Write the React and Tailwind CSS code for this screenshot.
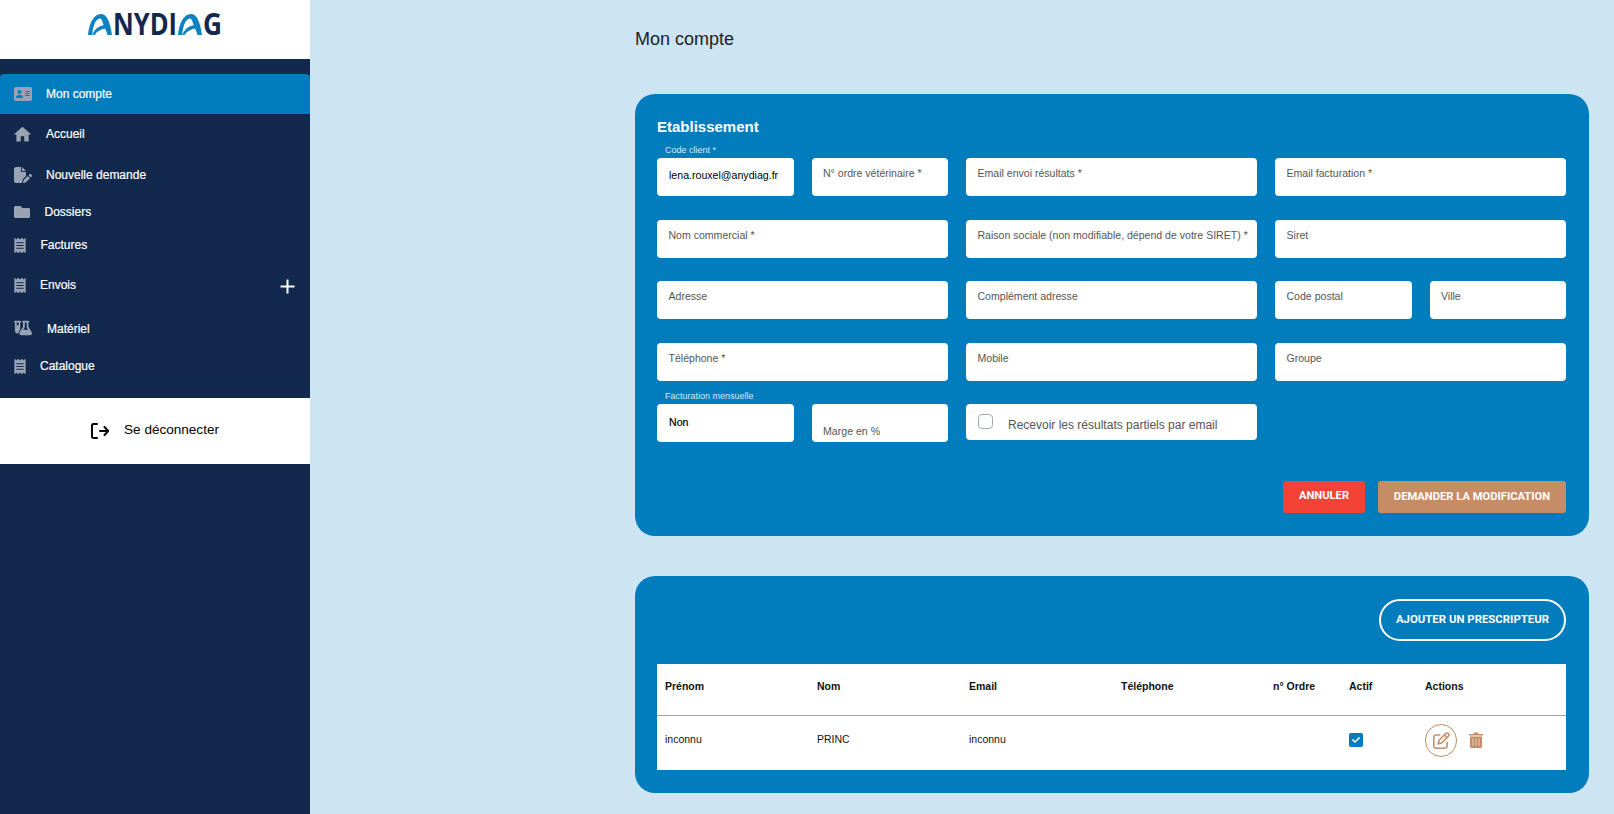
import React from "react";
import { FaFolder, FaReceipt, FaCheck } from "react-icons/fa";
import { FaFlaskVial, FaAddressCard, FaFilePen, FaRegPenToSquare } from "react-icons/fa6";
import { MdHome } from "react-icons/md";

const SANS = "font-['Liberation_Sans',Arial,sans-serif]";

function Logo() {
  const A = "M0 21 C1 9 6 0 13 0 C18.5 0 22 7 24 21 L19.5 21 C18.8 18 18 16 16.8 14.5 C12 15.5 8.5 17.8 6.5 21 L4.5 21 C6 15.5 10 12.5 15.6 11.2 C14.6 7 13.5 4.5 11.500 4.5 C7.5 5.5 5 12 4.2 21 Z";
  return (
    <svg width="136" height="48" viewBox="0 0 136 48" className="block" role="img" aria-label="ANYDIAG">
      <path d={A} fill="#0b83c2" transform="translate(0 13)" />
      <text x="25" y="34" fontFamily="'Open Sans',sans-serif" fontSize="29.5" fontWeight="700" fill="#12284c" textLength="64" lengthAdjust="spacingAndGlyphs">NYDI</text>
      <path d={A} fill="#0b83c2" transform="translate(90 13)" />
      <text x="115" y="34" fontFamily="'Open Sans',sans-serif" fontSize="29.5" fontWeight="700" fill="#12284c" textLength="19" lengthAdjust="spacingAndGlyphs">G</text>
    </svg>
  );
}

function NavItem({ icon, label, h, textClass, active, extra }) {
  return (
    <div className={`flex items-center pl-[14px] pr-[15px] ${h} ${active ? "bg-[#017cbc] rounded-t-[4px]" : ""}`}>
      <span className="text-[#9aa3b3] flex items-center">{icon}</span>
      <span className={`text-white text-[12px] font-medium [-webkit-text-stroke:0.2px_white] ${textClass}`}>{label}</span>
      {extra}
    </div>
  );
}

function Field({ label, className = "" }) {
  return (
    <div className={`bg-white rounded-[4px] px-[11.5px] pt-[8px] text-[10.55px] leading-[14px] whitespace-nowrap text-[#555] ${className}`}>
      {label}
    </div>
  );
}

function Floating({ label, value, className = "" }) {
  return (
    <div className={`relative bg-white rounded-[4px] pl-[12px] flex items-center text-[10.6px] text-black ${className}`}>
      <span className="absolute left-[8px] top-[-14px] text-[9px] leading-[12px] text-[#d5ecf8]">{label}</span>
      {value}
    </div>
  );
}

const cols = "grid grid-cols-[152px_152px_152px_152px_76px_76px_1fr]";

export default function App() {
  return (
    <div className={`flex h-[814px] w-full overflow-hidden bg-[#cde4f3] ${SANS}`}>
      <aside className="w-[310px] shrink-0 bg-[#12284c] flex flex-col">
        <div className="h-[59px] bg-white flex justify-center pt-[1px] pl-[1px]">
          <Logo />
        </div>
        <nav className="pt-[15px] pb-[14px]">
          <NavItem active h="h-[40px]" icon={<FaAddressCard size={18} />} label="Mon compte" textClass="ml-[14px]" />
          <NavItem h="h-[40px]" icon={<MdHome size={21} className="-ml-[2px]" />} label="Accueil" textClass="ml-[13px]" />
          <NavItem h="h-[42px]" icon={<FaFilePen size={16} className="w-[18px]" />} label="Nouvelle demande" textClass="ml-[14px]" />
          <NavItem h="h-[32px]" icon={<FaFolder size={16} />} label="Dossiers" textClass="ml-[14.5px]" />
          <NavItem h="h-[34px]" icon={<FaReceipt size={15} className="w-[12px]" />} label="Factures" textClass="ml-[14.5px]" />
          <NavItem
            h="h-[46px]"
            icon={<FaReceipt size={15} className="w-[12px]" />}
            label="Envois"
            textClass="ml-[14px]"
            extra={
              <span className="ml-auto relative top-[1px] w-[15px] h-[15px] flex items-center justify-center">
                <svg width="15" height="15" viewBox="0 0 15 15"><path d="M7.5 0.5v14M0.5 7.5h14" stroke="#fff" strokeWidth="2" /></svg>
              </span>
            }
          />
          <NavItem h="h-[40px]" icon={<FaFlaskVial size={18} />} label={<span className="relative top-[1px]">Matériel</span>} textClass="ml-[15px]" />
          <NavItem h="h-[36px]" icon={<FaReceipt size={15} className="w-[12px]" />} label="Catalogue" textClass="ml-[14px]" />
        </nav>
        <div className="h-[66px] bg-white flex items-center justify-center gap-[15px] pb-[1px]">
          <svg width="18" height="16" viewBox="0 0 18 16" fill="none" stroke="#000" strokeWidth="2" strokeLinecap="round" strokeLinejoin="round">
            <path d="M6 1H2.5C1.7 1 1 1.7 1 2.5v11c0 .8.7 1.5 1.5 1.5H6" />
            <path d="M9 8h8M13.5 4l3.7 4-3.7 4" />
          </svg>
          <span className="text-[13.55px] text-black">Se déconnecter</span>
        </div>
      </aside>

      <main className="flex-1 pl-[325px] pr-[25px] min-w-0">
        <h1 className="h-[94px] pt-[26px] text-[18px] leading-[26px] text-[#222] font-normal">Mon compte</h1>

        <section className="h-[442px] bg-[#017cbc] rounded-[20px] pl-[22px] pr-[23px] pt-[24px] flex flex-col">
          <h2 className="text-[15px] leading-[18px] font-bold text-white">Etablissement</h2>
          <div className="grid grid-cols-6 gap-x-[18px] gap-y-[23.5px] auto-rows-[38px] mt-[22px]">
            <Floating label="Code client *" value={<span className="relative top-[-1px]">lena.rouxel@anydiag.fr</span>} />
            <Field label="N° ordre vétérinaire *" />
            <Field label="Email envoi résultats *" className="col-span-2" />
            <Field label="Email facturation *" className="col-span-2" />

            <Field label="Nom commercial *" className="col-span-2" />
            <Field label="Raison sociale (non modifiable, dépend de votre SIRET) *" className="col-span-2" />
            <Field label="Siret" className="col-span-2" />

            <Field label="Adresse" className="col-span-2" />
            <Field label="Complément adresse" className="col-span-2" />
            <Field label="Code postal" />
            <Field label="Ville" />

            <Field label="Téléphone *" className="col-span-2" />
            <Field label="Mobile" className="col-span-2" />
            <Field label="Groupe" className="col-span-2" />

            <Floating label="Facturation mensuelle" value={<span className="font-medium [-webkit-text-stroke:0.2px_black]">Non</span>} />
            <div className="bg-white rounded-[4px] pl-[11.5px] flex items-end pb-[2px] text-[10.6px] text-[#555]">Marge en %</div>
            <label className="col-span-2 h-[36px] bg-white rounded-[4px] pl-[12px] flex items-center text-[12px] text-[#555]">
              <span className="w-[15px] h-[15px] rounded-[4px] border border-[#a3a8b8] relative top-[-1px]" />
              <span className="ml-[15px] relative top-[3px]">Recevoir les résultats partiels par email</span>
            </label>
          </div>
          <div className="flex justify-end gap-[13px] mt-[39px]">
            <button className="w-[82px] h-[32px] rounded-[3px] bg-[#f44336] text-white text-[11.2px] font-bold font-['Roboto',sans-serif] pb-[2px]">ANNULER</button>
            <button className="w-[188px] h-[32px] rounded-[3px] bg-[#c68c66] text-white text-[11.2px] font-bold font-['Roboto',sans-serif]">DEMANDER LA MODIFICATION</button>
          </div>
        </section>

        <section className="mt-[40px] h-[217px] bg-[#017cbc] rounded-[20px] pl-[22px] pr-[23px] pt-[23px]">
          <div className="flex justify-end">
            <button className="w-[187px] h-[42px] rounded-full border-2 border-white text-white text-[11.4px] font-bold font-['Roboto',sans-serif]">AJOUTER UN PRESCRIPTEUR</button>
          </div>
          <div className="mt-[23px] bg-white text-[10.5px] text-[#111]">
            <div className={`${cols} h-[52px] items-center border-b border-[#a5a5a5] font-bold pb-[6px]`}>
              {["Prénom", "Nom", "Email", "Téléphone", "n° Ordre", "Actif", "Actions"].map((h) => (
                <div key={h} className="pl-[8px]">{h}</div>
              ))}
            </div>
            <div className={`${cols} h-[54px] items-center pb-[6px]`}>
              <div className="pl-[8px]">inconnu</div>
              <div className="pl-[8px]">PRINC</div>
              <div className="pl-[8px]">inconnu</div>
              <div />
              <div />
              <div className="pl-[8px]">
                <span className="w-[14px] h-[14px] rounded-[2px] bg-[#017cbc] flex items-center justify-center text-white">
                  <FaCheck size={8} />
                </span>
              </div>
              <div className="pl-[8px] flex items-center gap-[12px] text-[#c68c66]">
                <span className="w-[32px] h-[33px] rounded-full border border-[#c68c66] flex items-center justify-center">
                  <FaRegPenToSquare size={17} />
                </span>
                <svg width="14" height="16" viewBox="0 0 14 16">
                  <path d="M0 2h4.5l.6-1.6h3.8L9.500 2H14v1.500H0z" fill="#c68c66" />
                  <path d="M1 4.500h12V14.500c0 .8-.6 1.500-1.400 1.500H2.400C1.600 16 1 15.300 1 14.500z" fill="#c68c66" />
                  <path d="M4 6.500v7.500M7 6.500v7.500M10 6.500v7.500" stroke="#e8d2c2" strokeWidth="1" />
                </svg>
              </div>
            </div>
          </div>
        </section>
      </main>
    </div>
  );
}
